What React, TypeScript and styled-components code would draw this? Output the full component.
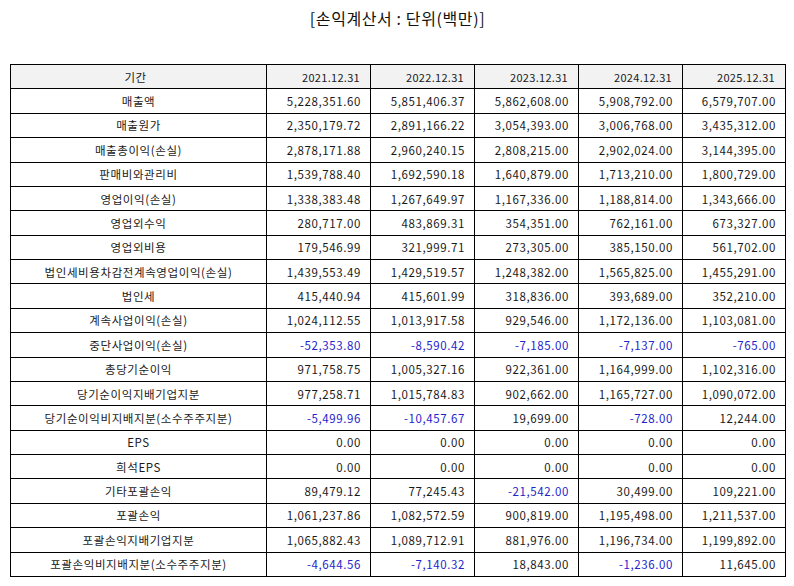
import styled, { createGlobalStyle } from 'styled-components';

const GlobalStyle = createGlobalStyle`
  html, body {
    margin: 0;
    padding: 0;
    background: #ffffff;
  }

  body {
    font-family: "Noto Sans CJK KR", "Noto Sans", sans-serif;
    color: #1a1a1a;
  }
`;

const Page = styled.div`
  width: 794px;
  padding: 6px 9px 0 10px;
  box-sizing: border-box;
`;

const Title = styled.h1`
  margin: 0 0 34px;
  height: 24px;
  line-height: 24px;
  text-align: center;
  font-weight: 400;
  font-size: 16px;
  letter-spacing: 0.6px;
  color: #111111;
`;

const Table = styled.table`
  width: 775px;
  border-collapse: collapse;
  table-layout: fixed;
  border: 1px solid #000000;
  font-size: 11px;

  th,
  td {
    box-sizing: border-box;
  }

  th {
    width: 104px;
  }

  th:first-child {
    width: 256px;
  }

  th:last-child {
    width: 103px;
  }
`;

const Row = styled.tr`
  height: 24.38px;
`;

const HeadCell = styled.th<{ $label?: boolean }>`
  background: #f2f2f2;
  border: 1px solid #000000;
  font-weight: 400;
  padding: 0 10px 0 4px;
  text-align: ${({ $label }) => ($label ? 'center' : 'right')};
  font-size: ${({ $label }) => ($label ? '11.5px' : '11px')};
  letter-spacing: ${({ $label }) => ($label ? '0.5px' : '0.3px')};
  white-space: nowrap;
`;

const LabelCell = styled.td`
  border: 1px solid #000000;
  text-align: center;
  padding: 0 4px;
  font-size: 11.5px;
  letter-spacing: 0.6px;
  white-space: nowrap;
`;

const ValueCell = styled.td<{ $negative?: boolean }>`
  border: 1px solid #000000;
  text-align: right;
  padding: 0 9px 0 2px;
  font-size: 11.5px;
  letter-spacing: 0.6px;
  white-space: nowrap;
  color: ${({ $negative }) => ($negative ? '#2424cc' : '#1a1a1a')};
`;

const periods = ['2021.12.31', '2022.12.31', '2023.12.31', '2024.12.31', '2025.12.31'];

const rows: [string, string[]][] = [
  ['매출액', ['5,228,351.60', '5,851,406.37', '5,862,608.00', '5,908,792.00', '6,579,707.00']],
  ['매출원가', ['2,350,179.72', '2,891,166.22', '3,054,393.00', '3,006,768.00', '3,435,312.00']],
  ['매출총이익(손실)', ['2,878,171.88', '2,960,240.15', '2,808,215.00', '2,902,024.00', '3,144,395.00']],
  ['판매비와관리비', ['1,539,788.40', '1,692,590.18', '1,640,879.00', '1,713,210.00', '1,800,729.00']],
  ['영업이익(손실)', ['1,338,383.48', '1,267,649.97', '1,167,336.00', '1,188,814.00', '1,343,666.00']],
  ['영업외수익', ['280,717.00', '483,869.31', '354,351.00', '762,161.00', '673,327.00']],
  ['영업외비용', ['179,546.99', '321,999.71', '273,305.00', '385,150.00', '561,702.00']],
  ['법인세비용차감전계속영업이익(손실)', ['1,439,553.49', '1,429,519.57', '1,248,382.00', '1,565,825.00', '1,455,291.00']],
  ['법인세', ['415,440.94', '415,601.99', '318,836.00', '393,689.00', '352,210.00']],
  ['계속사업이익(손실)', ['1,024,112.55', '1,013,917.58', '929,546.00', '1,172,136.00', '1,103,081.00']],
  ['중단사업이익(손실)', ['-52,353.80', '-8,590.42', '-7,185.00', '-7,137.00', '-765.00']],
  ['총당기순이익', ['971,758.75', '1,005,327.16', '922,361.00', '1,164,999.00', '1,102,316.00']],
  ['당기순이익지배기업지분', ['977,258.71', '1,015,784.83', '902,662.00', '1,165,727.00', '1,090,072.00']],
  ['당기순이익비지배지분(소수주주지분)', ['-5,499.96', '-10,457.67', '19,699.00', '-728.00', '12,244.00']],
  ['EPS', ['0.00', '0.00', '0.00', '0.00', '0.00']],
  ['희석EPS', ['0.00', '0.00', '0.00', '0.00', '0.00']],
  ['기타포괄손익', ['89,479.12', '77,245.43', '-21,542.00', '30,499.00', '109,221.00']],
  ['포괄손익', ['1,061,237.86', '1,082,572.59', '900,819.00', '1,195,498.00', '1,211,537.00']],
  ['포괄손익지배기업지분', ['1,065,882.43', '1,089,712.91', '881,976.00', '1,196,734.00', '1,199,892.00']],
  ['포괄손익비지배지분(소수주주지분)', ['-4,644.56', '-7,140.32', '18,843.00', '-1,236.00', '11,645.00']],
];

const App = () => {
  return (
    <Page>
      <GlobalStyle />
      <Title>[손익계산서 : 단위(백만)]</Title>
      <Table>
        <thead>
          <Row>
            <HeadCell $label>기간</HeadCell>
            {periods.map((p) => (
              <HeadCell key={p}>{p}</HeadCell>
            ))}
          </Row>
        </thead>
        <tbody>
          {rows.map(([label, values]) => (
            <Row key={label}>
              <LabelCell>{label}</LabelCell>
              {values.map((v, i) => (
                <ValueCell key={i} $negative={v.startsWith('-')}>
                  {v}
                </ValueCell>
              ))}
            </Row>
          ))}
        </tbody>
      </Table>
    </Page>
  );
};

export default App;
